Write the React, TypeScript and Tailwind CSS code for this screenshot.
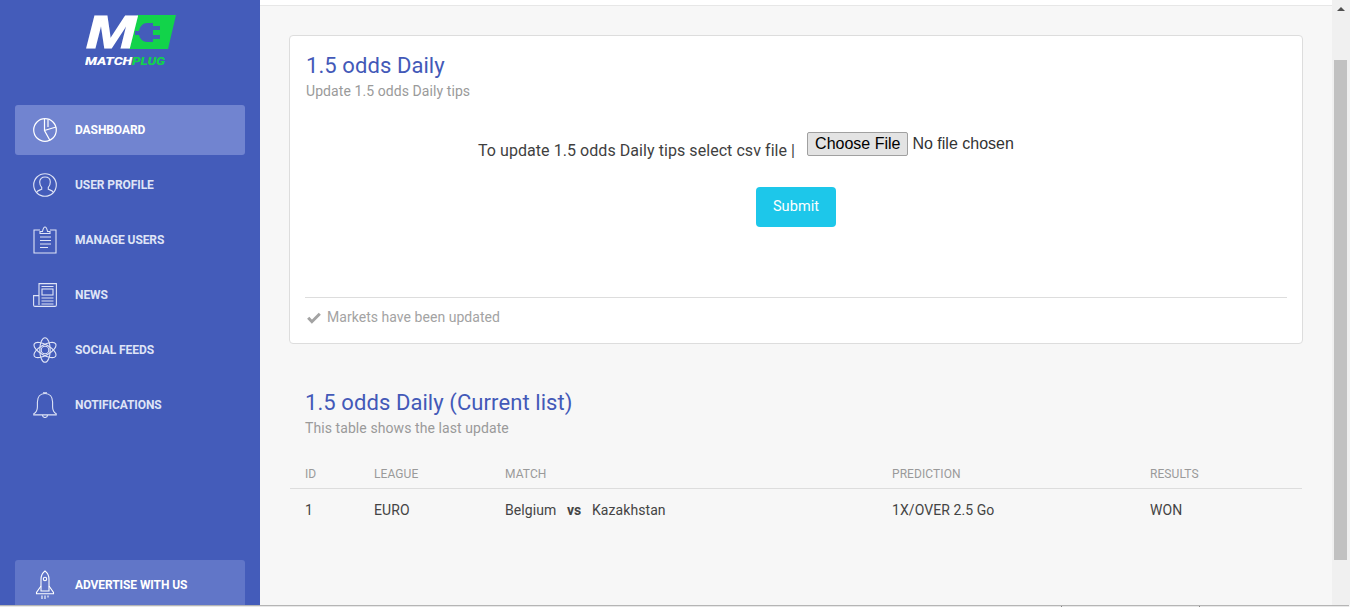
const navItems = [
  { label: 'DASHBOARD', icon: <PieIcon />, active: true },
  { label: 'USER PROFILE', icon: <UserIcon /> },
  { label: 'MANAGE USERS', icon: <ClipboardIcon /> },
  { label: 'NEWS', icon: <NewsIcon /> },
  { label: 'SOCIAL FEEDS', icon: <AtomIcon /> },
  { label: 'NOTIFICATIONS', icon: <BellIcon /> },
];

function PieIcon() {
  return (
    <svg width="24" height="24" viewBox="0 0 24 24" fill="none" stroke="currentColor" strokeWidth="1.2">
      <circle cx="12" cy="12" r="11.300" />
      <path d="M11.500 1v11.500l5.500 10M11.500 12.500l11.500-3.500M15 1.500v7.500" />
    </svg>
  );
}

function UserIcon() {
  return (
    <svg width="24" height="24" viewBox="0 0 24 24" fill="none" stroke="currentColor" strokeWidth="1.1">
      <circle cx="12" cy="12" r="11.300" />
      <path d="M3.500 19.500c1-2.200 3.200-2.300 5.200-3.200v-2C7.300 13 6.700 11 6.700 9c0-3.200 2.200-5 5.300-5s5.300 1.800 5.300 5c0 2-.6 4-2 5.300v2c2 .9 4.200 1 5.200 3.200" />
    </svg>
  );
}

function ClipboardIcon() {
  return (
    <svg width="24" height="28" viewBox="0 0 24 28" fill="none" stroke="currentColor" strokeWidth="1.1">
      <path d="M7 4H1v23h22V4h-6" />
      <path d="M7 7.500V5.500h2.500C10 3 10.500 1 12 1s2 2 2.500 4.500H17v2z" />
      <path d="M7 11h11M7 14.500h11M7 18h11M7 21.500h8" />
    </svg>
  );
}

function NewsIcon() {
  return (
    <svg width="24" height="24" viewBox="0 0 24 24" fill="none" stroke="currentColor" strokeWidth="1.1">
      <path d="M6 18V.6h17.400V22a1.400 1.400 0 0 1-1.400 1.400H2A1.400 1.400 0 0 1 .6 22v-9.400H6M6 22v-5" />
      <rect x="9" y="6" width="11" height="6" />
      <path d="M8.500 3.500h12M8.500 15h12M8.500 18h12M8.500 21h12" />
    </svg>
  );
}

function AtomIcon() {
  return (
    <svg width="24" height="26" viewBox="0 0 24 26" fill="none" stroke="currentColor" strokeWidth="1.1">
      <circle cx="12" cy="13" r="3.800" />
      <ellipse cx="12" cy="13" rx="5.200" ry="12.300" transform="rotate(60 12 13)" />
      <ellipse cx="12" cy="13" rx="5.200" ry="12.300" transform="rotate(-60 12 13)" />
      <ellipse cx="12" cy="13" rx="5.200" ry="12.300" />
    </svg>
  );
}

function BellIcon() {
  return (
    <svg width="24" height="26" viewBox="0 0 24 26" fill="none" stroke="currentColor" strokeWidth="1.1">
      <path d="M12 1.500c-4.800 0-7.600 3.500-7.600 8.500v5c0 3-1.500 5.500-3.600 6.800v1.100h22.400v-1.100c-2.100-1.300-3.600-3.800-3.600-6.800v-5c0-5-2.800-8.500-7.600-8.500z" />
      <path d="M10 .9h4M9.500 23c0 1.700 1 2.500 2.500 2.500s2.500-.8 2.500-2.500" />
    </svg>
  );
}

function RocketIcon() {
  return (
    <svg width="20" height="30" viewBox="0 0 20 30" fill="none" stroke="currentColor" strokeWidth="1.1">
      <path d="M10 1c2.800 2 4 5 4 8.500V21H6V9.500C6 6 7.200 3 10 1z" />
      <circle cx="10" cy="9" r="1.700" />
      <path d="M6 16l-4.500 6.500v1.200h17v-1.200L14 16" />
      <path d="M7 25.500V29M10 25.500V29M13 25.500V27.500" />
    </svg>
  );
}

function Logo() {
  return (
    <svg width="92" height="68" viewBox="0 0 92 68" className="block">
      <path d="M52 15h39l-8 34H44z" fill="#12d34a" />
      <text x="1" y="48" fontFamily="'Liberation Sans', sans-serif" fontWeight="700" fontStyle="italic" fontSize="46" fill="#ffffff" stroke="#ffffff" strokeWidth="1.200" textLength="50" lengthAdjust="spacingAndGlyphs">
        M
      </text>
      <path d="M50 31h4c1-5 4-8 8-8h6v3h7v4h-7v5h7v4h-7v3h-6c-4 0-7-3-8-7h-4z" fill="#445cba" />
      <text x="0" y="65" fontFamily="Roboto, sans-serif" fontWeight="900" fontStyle="italic" fontSize="11.500" fill="#ffffff" textLength="47" lengthAdjust="spacingAndGlyphs">
        MATCH
      </text>
      <text x="47" y="65" fontFamily="Roboto, sans-serif" fontWeight="900" fontStyle="italic" fontSize="11.500" fill="#12d34a" textLength="33" lengthAdjust="spacingAndGlyphs">
        PLUG
      </text>
    </svg>
  );
}

function Sidebar() {
  return (
    <aside className="w-[260px] shrink-0 h-[605px] overflow-hidden bg-[#445cba] flex flex-col px-[15px] tracking-[-0.08px]">
      <div className="flex h-[105px] pl-[70px]">
        <Logo />
      </div>
      <nav className="flex flex-col gap-[5px]">
        {navItems.map((item) => (
          <a
            key={item.label}
            href="#"
            className={`flex items-center h-[50px] rounded-[3px] pl-[18px] ${
              item.active ? 'bg-[#7184d0] text-white' : 'text-[#dfe4f6]'
            }`}
          >
            <span className="w-[42px] flex justify-start">{item.icon}</span>
            <span className="text-[12px] font-bold">{item.label}</span>
          </a>
        ))}
      </nav>
      <a href="#" className="mt-auto -mb-[4px] shrink-0 flex items-center h-[49px] rounded-[3px] bg-[#6176c8] text-white pl-[20px]">
        <span className="w-[40px] flex justify-start">
          <RocketIcon />
        </span>
        <span className="text-[12px] font-bold">ADVERTISE WITH US</span>
      </a>
    </aside>
  );
}

function Scrollbar() {
  return (
    <div className="w-[18px] shrink-0 h-[605px] bg-[#f0f0f0] flex flex-col items-center pr-px">
      <div className="mt-[7px] w-0 h-0 border-x-[4px] border-x-transparent border-b-[4px] border-b-[#505050]" />
      <div className="mt-[49px] w-[13px] h-[500px] bg-[#c1c1c1]" />
    </div>
  );
}

export default function App() {
  return (
    <div className="w-[1350px] h-[607px] overflow-hidden bg-[#f7f7f7] font-['Roboto',sans-serif]">
      <div className="flex h-[605px]">
        <Sidebar />
        <main className="flex-1 min-w-0 flex flex-col tracking-[0.08px]">
          <div className="h-[6px] bg-white border-b border-[#e7e7e7] shrink-0" />
          <div className="pt-[29px] px-[29px] flex flex-col">
            <section className="h-[309px] bg-white border border-[#dddddd] rounded-[4px] px-[15px] flex flex-col">
              <h2 className="text-[22px] leading-[26px] text-[#4359b8] mt-[17px] pl-px">1.5 odds Daily</h2>
              <p className="text-[14px] leading-[20px] text-[#9a9a9a] mt-[2px] pl-px">Update 1.5 odds Daily tips</p>
              <div className="flex items-start pl-[173px] mt-[32px] h-[36px]">
                <span className="text-[16px] leading-[24px] text-[#3f3f3f] mt-[6px] tracking-[0.06px]">To update 1.5 odds Daily tips select csv file |</span>
                <input
                  type="file"
                  className="ml-[12px] -mt-px w-[260px] text-[16px] leading-[20px] text-[#333333] tracking-normal font-['Liberation_Sans',sans-serif] file:bg-[#e3e3e3] file:border file:border-[#a0a0a0] file:rounded-[2px] file:px-[7px] file:h-[24px] file:mr-[4px] file:text-black"
                />
              </div>
              <div className="flex justify-center mt-[18px]">
                <button className="w-[80px] h-[40px] pb-px bg-[#1dc7ea] rounded-[4px] text-white text-[14.500px] font-normal">Submit</button>
              </div>
              <div className="mt-[70px] border-t border-[#dddddd] pt-[9px] flex items-center gap-[5px] text-[#a3a3a3] text-[14px] leading-[20px] tracking-[0.04px]">
                <svg width="14" height="12" viewBox="0 0 14 12" fill="none" stroke="currentColor" strokeWidth="3" className="ml-[2px] mt-px">
                  <path d="M1.200 5.800 4.900 9.700 12.800 1.700" />
                </svg>
                <span className="ml-px">Markets have been updated</span>
              </div>
            </section>
            <section className="mt-[46px]">
              <h2 className="text-[22px] leading-[26px] text-[#4359b8] pl-[16px]">1.5 odds Daily (Current list)</h2>
              <p className="text-[14px] leading-[20px] text-[#9a9a9a] pl-[16px] mt-[2px]">This table shows the last update</p>
              <table className="w-[1012px] mt-[23px] ml-px text-[14px] table-fixed">
                <thead>
                  <tr className="border-b border-[#dddddd] text-left text-[#9a9a9a]">
                    <th className="w-[84px] pl-[15px] h-[27px] font-normal text-[12px]">ID</th>
                    <th className="w-[131px] font-normal text-[12px]">LEAGUE</th>
                    <th className="w-[387px] font-normal text-[12px]">MATCH</th>
                    <th className="w-[258px] font-normal text-[12px]">PREDICTION</th>
                    <th className="font-normal text-[12px]">RESULTS</th>
                  </tr>
                </thead>
                <tbody>
                  <tr className="text-[#444444]">
                    <td className="pl-[15px] h-[45px]">1</td>
                    <td>EURO</td>
                    <td>
                      Belgium <b className="mx-[7px]">vs</b> Kazakhstan
                    </td>
                    <td>1X/OVER 2.5 Go</td>
                    <td>WON</td>
                  </tr>
                </tbody>
              </table>
            </section>
          </div>
        </main>
        <Scrollbar />
      </div>
      <div className="h-px bg-[#b5b5b5] w-[1349px]" />
      <div className="h-px bg-[#e8e8e8] w-[1349px] flex">
        <div className="ml-[1061px] w-px bg-[#888888]" />
        <div className="ml-[137px] w-px bg-[#888888]" />
      </div>
    </div>
  );
}
